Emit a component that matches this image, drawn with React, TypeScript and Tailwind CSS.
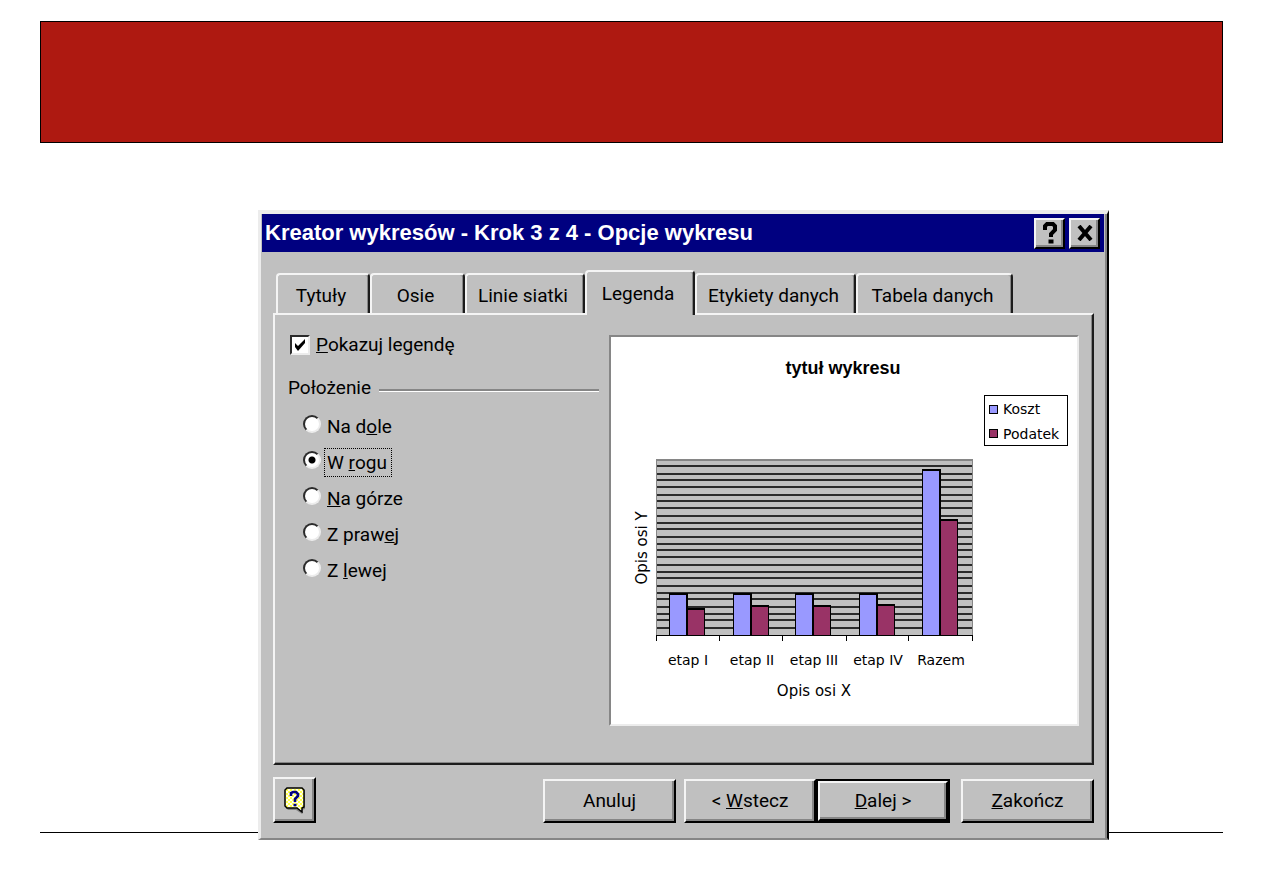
import React, { useState } from 'react';

interface Option {
  id: string;
  before: string;
  key: string;
  after: string;
}

const POSITIONS: Option[] = [
  { id: 'bottom', before: 'Na d', key: 'o', after: 'le' },
  { id: 'corner', before: 'W ', key: 'r', after: 'ogu' },
  { id: 'top', before: '', key: 'N', after: 'a górze' },
  { id: 'right', before: 'Z praw', key: 'e', after: 'j' },
  { id: 'left', before: 'Z ', key: 'l', after: 'ewej' },
];

const TABS = [
  { label: 'Tytuły', width: 'w-[94px]' },
  { label: 'Osie', width: 'w-[95px]' },
  { label: 'Linie siatki', width: 'w-[120px]' },
  { label: 'Legenda', width: 'w-[110px]' },
  { label: 'Etykiety danych', width: 'w-[161px]' },
  { label: 'Tabela danych', width: 'w-[157px]' },
];

const GRID_LINES = [
  129, 137, 143, 150, 158, 164, 171, 179, 186, 192, 200, 207,
  213, 220, 228, 235, 241, 249, 256, 262, 270, 277, 283, 291,
];

const CATEGORIES = [
  { label: 'etap I', x: 58, cost: 256, tax: 271 },
  { label: 'etap II', x: 122, cost: 256, tax: 268 },
  { label: 'etap III', x: 184, cost: 256, tax: 268 },
  { label: 'etap IV', x: 248, cost: 256, tax: 267 },
  { label: 'Razem', x: 311, cost: 132, tax: 182 },
];

const TICKS = [45, 108, 171, 235, 297, 361];

const RAISED =
  'bg-[#c0c0c0] border-2 border-t-[#f4f4f4] border-l-[#f4f4f4] border-r-black border-b-black shadow-[inset_-2px_-2px_0_#868686]';

const Chart: React.FC = () => (
  <svg viewBox="0 0 466 387" className="block w-full h-auto" role="img" aria-label="tytuł wykresu">
    <text x="232" y="37" textAnchor="middle" className="font-['Liberation_Sans',sans-serif] text-[18px] font-bold">tytuł wykresu</text>

    <g shapeRendering="crispEdges">
      <rect x="45" y="122" width="317" height="177" fill="#868686" />
      <rect x="46" y="124" width="315" height="174" fill="#c0c0c0" />
      {GRID_LINES.map((y) => (
        <rect key={y} x="46" y={y - 1} width="315" height="2" fill="#2b2b2b" />
      ))}
      {CATEGORIES.map(({ label, x, cost, tax }) => (
        <g key={label}>
          <rect x={x} y={cost} width="19" height={299 - cost} />
          <rect x={x + 1} y={cost + 2} width="16" height={296 - cost} fill="#9999ff" />
          <rect x={x + 17} y={tax} width="19" height={299 - tax} />
          <rect x={x + 19} y={tax + 2} width="16" height={296 - tax} fill="#993366" />
        </g>
      ))}
      <rect x="45" y="298" width="317" height="1" />
      {TICKS.map((x) => (
        <rect key={x} x={x} y="298" width="1" height="6" />
      ))}
      <rect x="373.5" y="58.5" width="83" height="50" fill="#fff" stroke="#000" />
      <rect x="378.5" y="68.5" width="8" height="8" fill="#9999ff" stroke="#000" />
      <rect x="378.5" y="92.5" width="8" height="8" fill="#993366" stroke="#000" />
    </g>

    <g className="font-['DejaVu_Sans',sans-serif] text-[14px]">
      {CATEGORIES.map(({ label, x }) => (
        <text key={label} x={x + 19} y="328" textAnchor="middle">{label}</text>
      ))}
      <text x="203" y="359" textAnchor="middle" className="text-[15px]">Opis osi X</text>
      <text x="36" y="211" textAnchor="middle" transform="rotate(-90 36 211)" className="text-[15px]">Opis osi Y</text>
      <text x="392" y="77">Koszt</text>
      <text x="392" y="102">Podatek</text>
    </g>
  </svg>
);

const HelpIcon: React.FC = () => (
  <svg viewBox="0 0 22 27" className="w-[22px] h-[27px]" aria-hidden="true">
    <defs>
      <pattern id="paper" width="4" height="4" patternUnits="userSpaceOnUse">
        <rect width="4" height="4" fill="#fffff0" />
        <rect width="2" height="2" fill="#ffff4d" />
        <rect x="2" y="2" width="2" height="2" fill="#ffff4d" />
      </pattern>
    </defs>
    <path d="M4 2h15l2 2v18l-3 1v4l-6-4H4l-2-2V4z" fill="#868686" />
    <path d="M3 1h15l2 2v17l-2 1v4l-5-4H3l-2-2V3z" fill="url(#paper)" stroke="#000" strokeWidth="1.5" />
    <path d="M7 9V6l2-1h3l2 2v2l-3 3v3M9.5 18h3" fill="none" stroke="#000080" strokeWidth="2.6" />
  </svg>
);

const App: React.FC = () => {
  const [activeTab, setActiveTab] = useState('Legenda');
  const [showLegend, setShowLegend] = useState(true);
  const [position, setPosition] = useState('corner');

  return (
    <div className="min-h-screen bg-white px-10 pt-[21px] pb-10 text-black font-['Roboto',sans-serif] text-[19px] leading-6">
      <header className="h-[122px] bg-[#ae1911] border border-black" />

      <main
        role="dialog"
        aria-labelledby="wizard-title"
        className="relative z-10 mt-[67px] ml-[218px] mr-[114px] bg-[#c0c0c0] border-t-4 border-l-[3px] border-r-2 border-b-2 border-t-[#ececec] border-l-[#ececec] border-r-black border-b-[#868686] shadow-[inset_-2px_0_0_#868686] pl-px pr-[3px]"
      >
        <div className="flex items-center h-[38px] bg-[#000080] pl-[3px] pr-1">
          <h1 id="wizard-title" className="flex-1 text-white font-['Liberation_Sans',sans-serif] text-[22px] font-bold">
            Kreator wykresów - Krok 3 z 4 - Opcje wykresu
          </h1>
          <div className="flex gap-1">
            <button aria-label="Pomoc" className={`flex items-center justify-center w-[31px] h-[31px] ${RAISED}`}>
              <svg viewBox="0 0 16 22" className="w-4 h-[22px]">
                <path d="M3 8V4l2-2h6l2 2v4l-4 4v3M6.500 19.500h5" fill="none" stroke="#000" strokeWidth="4" />
              </svg>
            </button>
            <button aria-label="Zamknij" className={`flex items-center justify-center w-[31px] h-[31px] ${RAISED}`}>
              <svg viewBox="0 0 16 16" className="w-4 h-4">
                <path d="M2 1l12 14M14 1L2 15" stroke="#000" strokeWidth="4" />
              </svg>
            </button>
          </div>
        </div>

        <div className="pt-[18px] pl-[11px] pr-[10px] pb-[15px]">
          <div role="tablist" className="relative z-10 flex items-end pl-[3px]">
            {TABS.map(({ label, width }) => (
              <button
                key={label}
                role="tab"
                aria-selected={label === activeTab}
                onClick={() => setActiveTab(label)}
                className={`${width} whitespace-nowrap rounded-t-[4px] bg-[#c0c0c0] border-t-2 border-l-2 border-r-2 border-t-[#f4f4f4] border-l-[#f4f4f4] border-r-[#1c1c1c] shadow-[inset_-1px_0_0_#868686] pr-1 ${
                  label === activeTab ? 'h-[45px] -mb-0.5' : 'h-10 pt-1'
                }`}
              >
                {label}
              </button>
            ))}
          </div>

          <div
            role="tabpanel"
            className="flex gap-[10px] h-[452px] pt-[18px] pl-[13px] pr-[13px] border-2 border-t-[#f4f4f4] border-l-[#f4f4f4] border-r-[#1c1c1c] border-b-[#1c1c1c] shadow-[inset_-1px_-1px_0_#868686]"
          >
            <div className="flex-1">
              <label className="flex items-center gap-[6px]">
                <input
                  type="checkbox"
                  checked={showLegend}
                  onChange={(e) => setShowLegend(e.target.checked)}
                  className="sr-only"
                />
                <span className="flex items-center justify-center w-5 h-5 ml-0.5 bg-white border-2 border-t-[#2b2b2b] border-l-[#2b2b2b] border-r-[#ececec] border-b-[#ececec]">
                  {showLegend && (
                    <svg viewBox="0 0 14 14" className="w-3.5 h-3.5">
                      <path d="M2 5l3 3 7-7v4l-7 8-3-4z" />
                    </svg>
                  )}
                </span>
                <span><u>P</u>okazuj legendę</span>
              </label>

              <fieldset className="mt-[19px]">
                <legend className="flex items-center gap-2 w-full">
                  Położenie
                  <span className="flex-1 h-[3px] mt-1 bg-[#868686] border-b border-white" />
                </legend>
                <div className="flex flex-col gap-[6px] pt-[12px] pl-[15px]">
                  {POSITIONS.map(({ id, before, key, after }) => (
                    <label key={id} className="flex h-[30px]">
                      <input
                        type="radio"
                        name="position"
                        checked={position === id}
                        onChange={() => setPosition(id)}
                        className="appearance-none w-[18px] h-[18px] mt-[3px] rounded-full bg-white border-2 border-t-[#2b2b2b] border-l-[#2b2b2b] border-r-[#ececec] border-b-[#ececec] checked:bg-[radial-gradient(circle,#000_3px,#fff_4px)]"
                      />
                      <span
                        className={`flex items-center ml-[3px] h-[29px] border border-dotted pl-0.5 pr-1 whitespace-pre ${
                          position === id ? 'border-black' : 'border-transparent'
                        }`}
                      >
                        {before}<u>{key}</u>{after}
                      </span>
                    </label>
                  ))}
                </div>
              </fieldset>
            </div>

            <div className="w-[470px] shrink-0 self-start mt-0.5 bg-white border-2 border-t-[#868686] border-l-[#868686] border-r-[#ececec] border-b-[#ececec]">
              <Chart />
            </div>
          </div>

          <div className="flex items-end mt-3">
            <button aria-label="Pomoc" className={`flex items-center justify-center w-[43px] h-[46px] ${RAISED}`}>
              <HelpIcon />
            </button>
            <div className="flex ml-auto">
              <button className={`w-[133px] h-11 ${RAISED}`}>Anuluj</button>
              <button className={`w-[132px] h-11 ml-2 ${RAISED}`}>&lt; <u>W</u>stecz</button>
              <div className="border-2 border-black">
                <button className={`w-[130px] h-10 ${RAISED}`}><u>D</u>alej &gt;</button>
              </div>
              <button className={`w-[133px] h-11 ml-[11px] ${RAISED}`}><u>Z</u>akończ</button>
            </div>
          </div>
        </div>
      </main>

      <hr className="-mt-2 border-black" />
    </div>
  );
};

export default App;
